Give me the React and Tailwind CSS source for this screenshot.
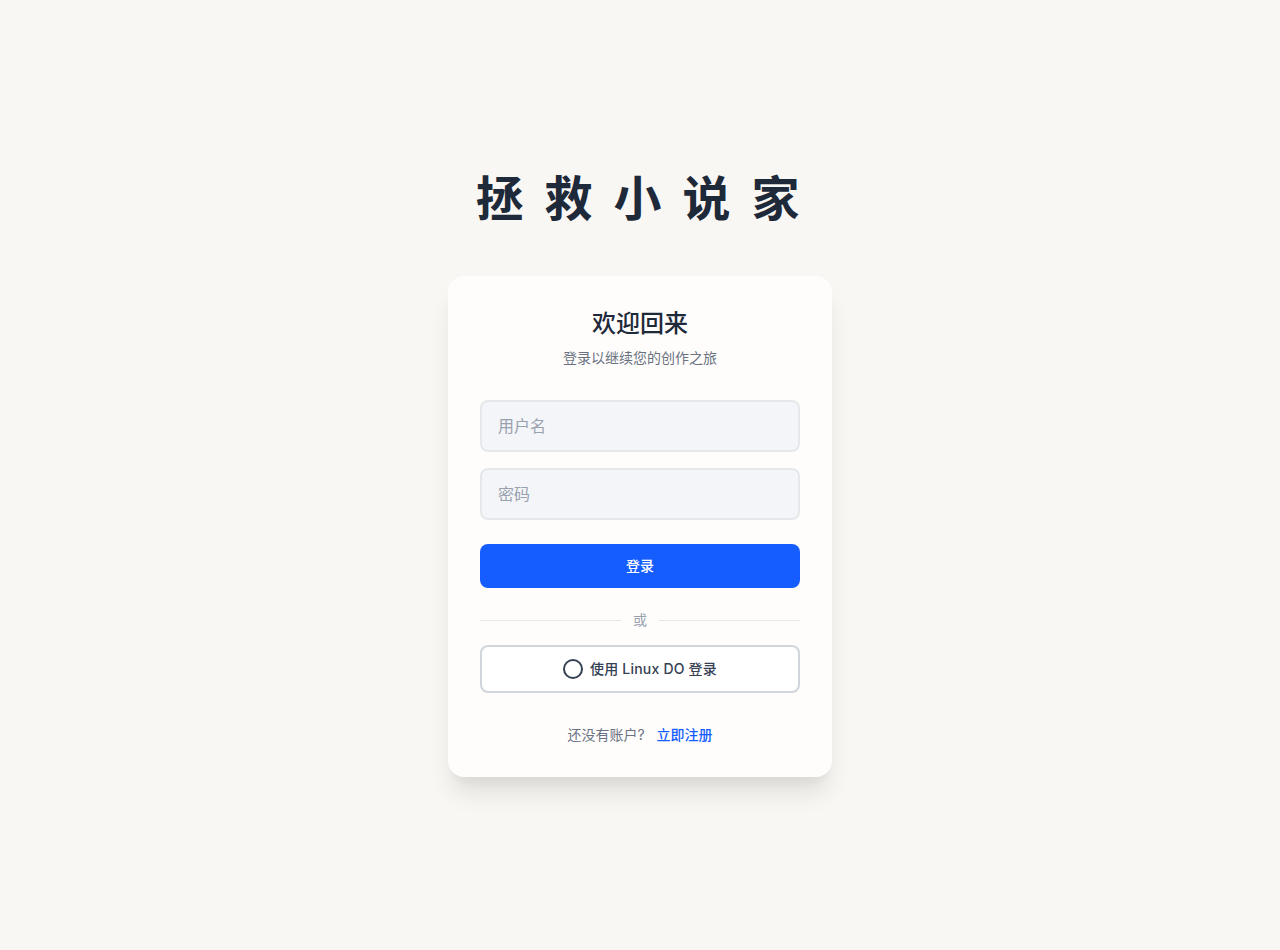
import React from 'react';

const font = "font-['Inter','Noto_Sans_CJK_SC',sans-serif]";

const Field = ({ placeholder, type = 'text' }) => (
  <input
    type={type}
    placeholder={placeholder}
    className="block h-[52px] w-full rounded-lg border-2 border-[#e5e7eb] bg-[#f3f5f8] px-4 text-base text-gray-800 outline-none placeholder:text-gray-400"
  />
);

const App = () => {
  return (
    <div className={`flex min-h-screen flex-col items-center justify-center bg-[#f8f7f3] ${font}`}>
      <h1 className="mb-[51px] text-5xl leading-[52px] font-bold tracking-widest text-gray-800">
        拯 救 小 说 家
      </h1>

      <div className="w-96 rounded-2xl bg-[#fefdfb] p-8 shadow-[0_20px_25px_-5px_rgba(0,0,0,0.1),0_10px_10px_-5px_rgba(0,0,0,0.04)]">
        <div className="mb-8 text-center">
          <h2 className="text-2xl leading-8 font-medium text-gray-800">欢迎回来</h2>
          <p className="mt-2 text-sm leading-5 text-gray-500">登录以继续您的创作之旅</p>
        </div>

        <form className="flex flex-col gap-4">
          <Field placeholder="用户名" />
          <Field placeholder="密码" type="password" />
          <button
            type="button"
            className="mt-2 h-11 w-full rounded-lg bg-[#165dff] text-sm font-medium text-white"
          >
            登录
          </button>
        </form>

        {/* divider */}
        <div className="relative mt-[22px] mb-[15px] flex h-5 items-center justify-center">
          <div className="absolute inset-x-0 top-1/2 h-px bg-gray-200"></div>
          <span className="relative bg-[#fefdfb] px-3 text-sm leading-5 text-gray-400">或</span>
        </div>

        <button
          type="button"
          className="flex h-12 w-full items-center justify-center gap-[7px] rounded-lg border-2 border-gray-300 bg-white text-sm font-medium tracking-[0.015em] text-gray-700"
        >
          <svg width="20" height="20" viewBox="0 0 20 20" fill="none" stroke="currentColor" strokeWidth="2">
            <circle cx="10" cy="10" r="9" />
          </svg>
          使用 Linux DO 登录
        </button>

        <p className="mt-8 text-center text-sm leading-5 text-gray-500">
          还没有账户?
          <a href="#" className="ml-3 font-medium text-[#165dff]">立即注册</a>
        </p>
      </div>
    </div>
  );
};

export default App;
